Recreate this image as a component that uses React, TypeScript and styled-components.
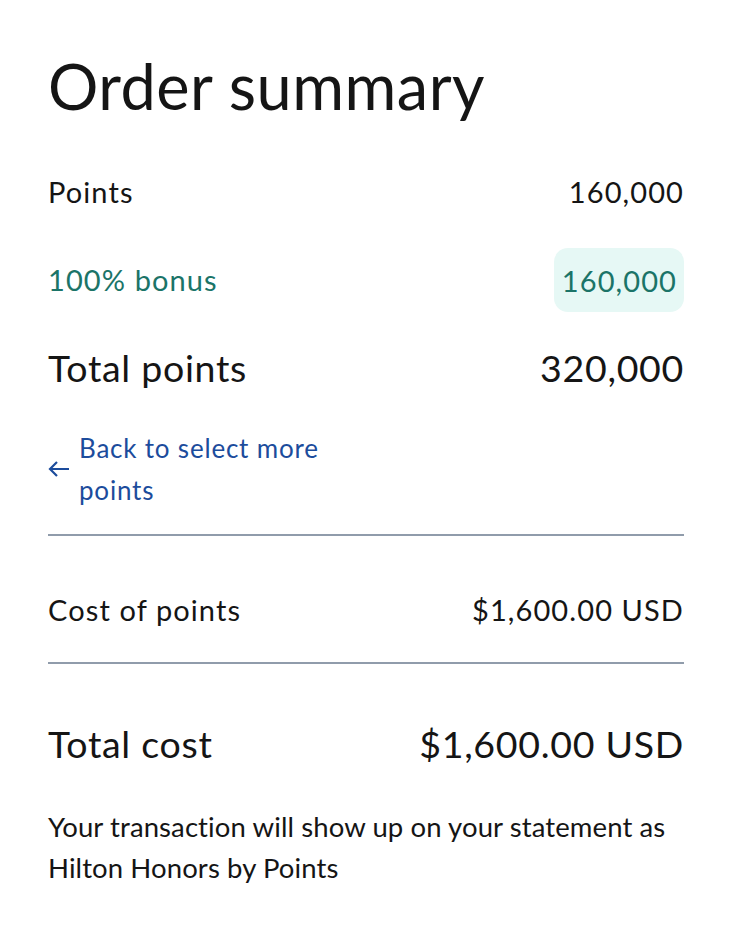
import React from 'react';
import styled, { createGlobalStyle } from 'styled-components';

const GlobalStyle = createGlobalStyle`
  * {
    box-sizing: border-box;
  }
  body {
    margin: 0;
    background: #ffffff;
    font-family: 'Lato', 'Open Sans', sans-serif;
    color: #151515;
  }
`;

const Summary = styled.section`
  width: 636px;
  margin-left: 48px;
  padding-top: 48px;
`;

const Title = styled.h1`
  margin: 0 0 36px;
  font-size: 63px;
  font-weight: 400;
  line-height: 76px;
  letter-spacing: 0.5px;
`;

const Row = styled.div<{ $gap?: number }>`
  display: flex;
  align-items: center;
  justify-content: space-between;
  min-height: 64px;
  margin-bottom: ${(p) => p.$gap ?? 24}px;
`;

// rows sitting between dividers: text is set lower than centre
const CostRow = styled.div<{ $top: number; $bottom: number }>`
  display: flex;
  align-items: center;
  justify-content: space-between;
  padding: ${(p) => p.$top}px 0 ${(p) => p.$bottom}px;
`;

const Label = styled.span<{ $big?: boolean; $accent?: boolean }>`
  font-size: ${(p) => (p.$big ? 37.5 : 29)}px;
  line-height: ${(p) => (p.$big ? 44 : 36)}px;
  letter-spacing: ${(p) => (p.$big ? 0.7 : 1.1)}px;
  color: ${(p) => (p.$accent ? '#1b7468' : '#151515')};
`;

const Value = styled(Label)``;

const BonusPill = styled.span`
  display: inline-flex;
  align-items: center;
  height: 64px;
  padding: 0 7px 0 8px;
  border-radius: 14px;
  background: #e6f8f5;
  color: #1b7468;
  font-size: 29px;
  letter-spacing: 1.1px;
`;

const BackLink = styled.a`
  display: flex;
  align-items: center;
  gap: 9px;
  margin: 0 0 23px;
  color: #1c4c9c;
  text-decoration: none;
  cursor: pointer;
`;

const BackText = styled.span`
  max-width: 300px;
  font-size: 26px;
  line-height: 42px;
  letter-spacing: 0.8px;
`;

const Divider = styled.hr`
  margin: 0;
  border: 0;
  height: 2px;
  background: #909cab;
`;

const Note = styled.p`
  margin: 0;
  font-size: 27.5px;
  line-height: 41px;
  letter-spacing: 0.1px;
`;

export default function App() {
  return (
    <>
      <GlobalStyle />
      <Summary>
        <Title>Order summary</Title>
        <Row>
          <Label>Points</Label>
          <Value>160,000</Value>
        </Row>
        <Row>
          <Label $accent>100% bonus</Label>
          <BonusPill>160,000</BonusPill>
        </Row>
        <Row $gap={27}>
          <Label $big>Total points</Label>
          <Value $big>320,000</Value>
        </Row>
        <BackLink>
          <svg width="22" height="16" viewBox="0 0 22 16" fill="none" stroke="currentColor" strokeWidth="2.2">
            <path d="M21 8H2M9 1L2 8l7 7" />
          </svg>
          <BackText>Back to select more points</BackText>
        </BackLink>
        <Divider />
        <CostRow $top={56} $bottom={34}>
          <Label>Cost of points</Label>
          <Value>$1,600.00 USD</Value>
        </CostRow>
        <Divider />
        <CostRow $top={58} $bottom={40}>
          <Label $big>Total cost</Label>
          <Value $big>$1,600.00 USD</Value>
        </CostRow>
        <Note>Your transaction will show up on your statement as Hilton Honors by Points</Note>
      </Summary>
    </>
  );
}
